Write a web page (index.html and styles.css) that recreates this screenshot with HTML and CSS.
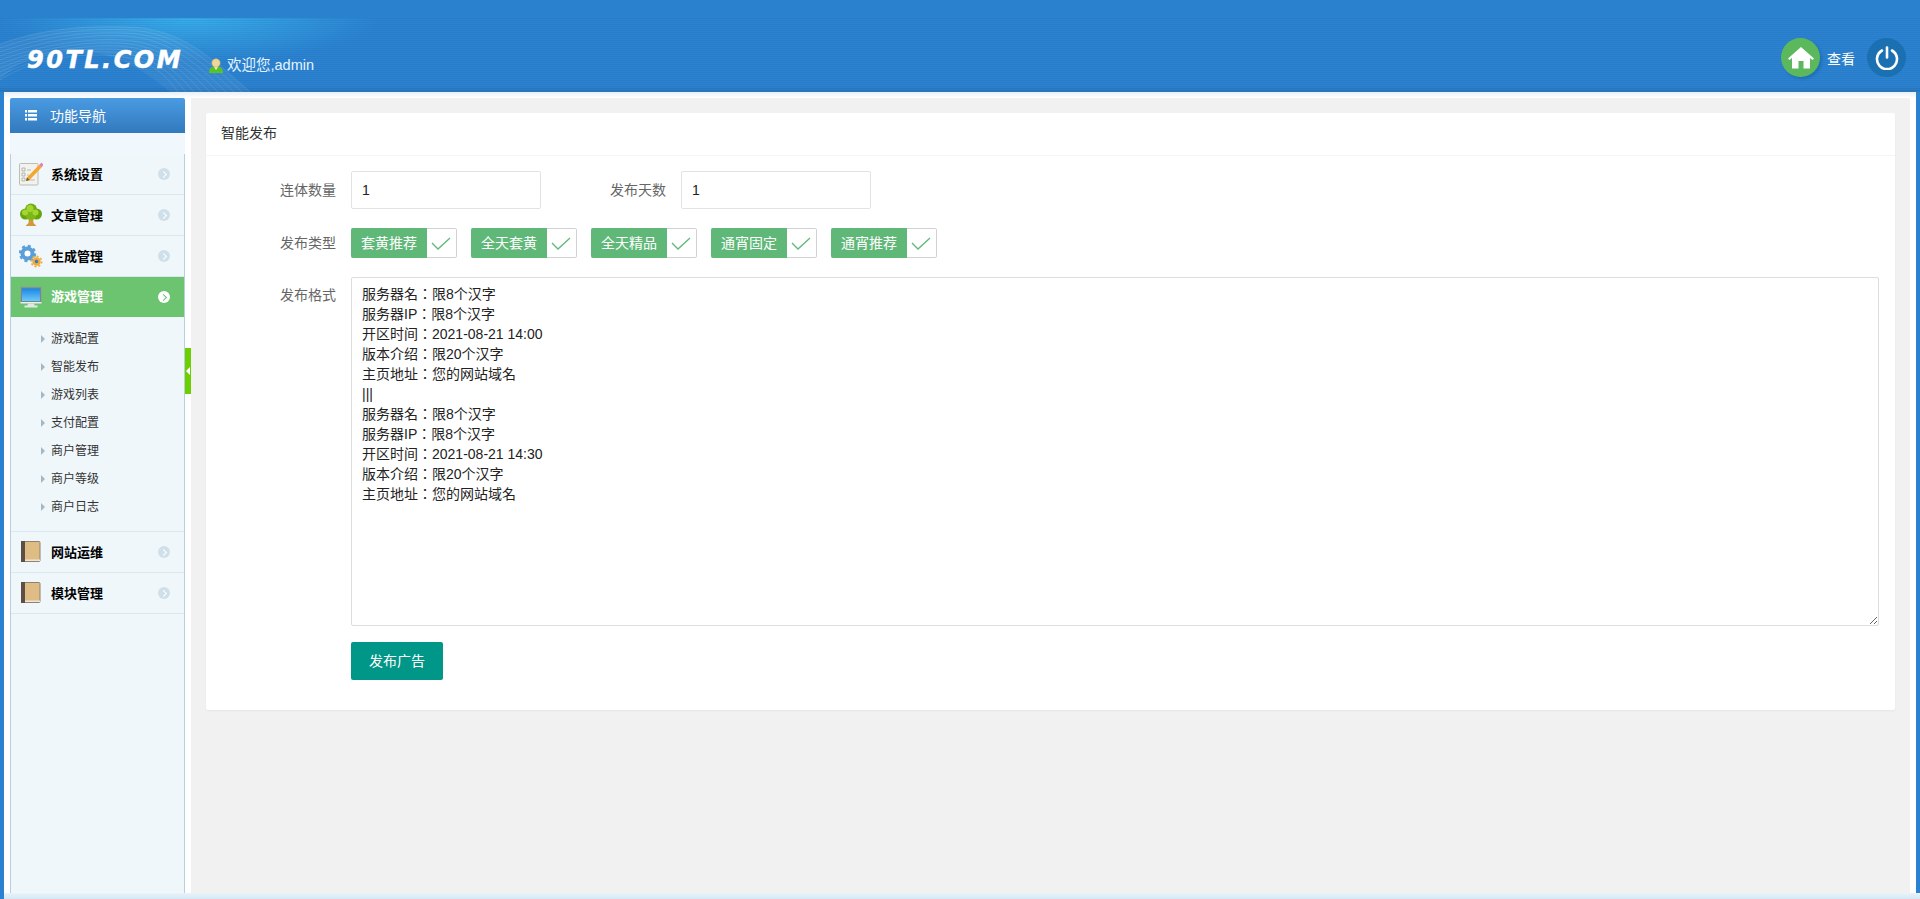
FILE: index.html
```html
<!DOCTYPE html>
<html lang="zh-CN">
<head>
<meta charset="utf-8">
<title>智能发布</title>
<link rel="stylesheet" href="styles.css">
</head>
<body>
<header class="top">
  <svg class="waves" viewBox="0 0 400 74" width="400" height="74" aria-hidden="true">
    <path d="M0 26C40 12 80 7 130 9S210 38 250 74H170C130 40 90 26 50 36S15 50 0 62Z" fill="#fff" fill-opacity=".06"/>
    <g fill="none" stroke="#fff" stroke-opacity=".11">
      <path d="M0 26C40 12 80 7 130 9S210 38 250 74"/>
      <path d="M0 30C40 16 80 10 128 12S205 40 242 74"/>
      <path d="M0 34C40 20 80 13 126 15S200 42 234 74"/>
      <path d="M0 38C40 24 80 16 124 18S195 44 226 74"/>
      <path d="M0 42C40 28 80 20 122 22S190 46 218 74"/>
      <path d="M0 46C40 31 80 23 120 25S185 48 210 74"/>
      <path d="M0 50C36 35 75 27 116 28S180 50 202 74"/>
      <path d="M0 54C32 38 70 30 112 31S175 52 194 74"/>
      <path d="M0 58C28 42 65 33 108 34S170 54 186 74"/>
      <path d="M0 62C24 46 60 36 104 37S165 56 178 74"/>
    </g>
  </svg>
  <div class="brand">
    <span class="logo">90TL.COM</span>
    <span class="welcome">
      <svg class="user" viewBox="0 0 14 15" width="14" height="15" aria-hidden="true">
        <path d="M0 15c0-4 2-6 4-6h6c2 0 4 2 4 6z" fill="#58c322"/>
        <path d="M5 9l2 3 2-3z" fill="#eaf6e0"/>
        <circle cx="7" cy="5" r="4.200" fill="#f1d795" stroke="#c9a765" stroke-width=".6"/>
      </svg>
      欢迎您,admin
    </span>
  </div>
  <div class="actions">
    <span class="round home">
      <svg viewBox="0 0 26 24" width="26" height="24" aria-hidden="true">
        <path d="M13 1 0 12.500l1.600 1.600L4 12v10.500h6.500V15h5v7.500H22V12l2.400 2.100L26 12.500z" fill="#fff"/>
      </svg>
    </span>
    <span class="look">查看</span>
    <span class="round power">
      <svg viewBox="0 0 24 24" width="24" height="24" aria-hidden="true">
        <path d="M7 4.500a10 10 0 1 0 10 0" fill="none" stroke="#fff" stroke-width="2.600" stroke-linecap="round"/>
        <path d="M12 1.500v10" fill="none" stroke="#fff" stroke-width="2.600" stroke-linecap="round"/>
      </svg>
    </span>
  </div>
</header>

<div class="shell">
  <aside class="side">
    <div class="side-head">
      <svg viewBox="0 0 12 11" width="12" height="11" aria-hidden="true">
        <path d="M0 0h2v2.500H0zM3 0h9v2.500H3zM0 4h2v2.500H0zM3 4h9v2.500H3zM0 8h2v2.500H0zM3 8h9v2.500H3z" fill="#fff"/>
      </svg>
      <span>功能导航</span>
    </div>
    <div class="side-gap"></div>
    <nav class="menu">
      <a class="item">
        <svg class="ico" viewBox="0 0 24 24" aria-hidden="true">
          <rect x="0.500" y="1.500" width="18.500" height="21.500" rx="1" fill="#f2f2ee" stroke="#bdbdb5"/>
          <path d="M3 6h3v3H3zM3 11h3v3H3zM3 16h3v3H3z" fill="none" stroke="#a8a8a2" stroke-width=".8"/>
          <path d="M8 8h4M8 13h2M8 18h8" stroke="#bcbcb5"/>
          <path d="M8 15.500 20 3l2.500 2.500L10.500 18 7 19z" fill="#f4a72b"/>
          <path d="M7 19l1-3.500 2.500 2.500z" fill="#6b5a40"/>
          <path d="M20 3l1.800-1.800a1 1 0 0 1 1.400 0l.8.800a1 1 0 0 1 0 1.400L22.500 5.500z" fill="#e77fb0"/>
        </svg>
        <span>系统设置</span><i class="dot"></i>
      </a>
      <a class="item">
        <svg class="ico" viewBox="0 0 24 24" aria-hidden="true">
          <path d="M10 14h4l.5 6 3 3H6.500l3-3z" fill="#d09a3c"/>
          <circle cx="12" cy="6.500" r="6" fill="#74ad10"/>
          <circle cx="6.500" cy="11" r="5.500" fill="#69a30d"/>
          <circle cx="17.500" cy="11" r="5.500" fill="#69a30d"/>
          <circle cx="12" cy="11.500" r="5.500" fill="#7fb815"/>
          <circle cx="11" cy="5.500" r="3.500" fill="#a4d633"/>
          <circle cx="6" cy="9.500" r="3" fill="#a4d633"/>
          <circle cx="16.500" cy="9.500" r="3" fill="#a4d633"/>
        </svg>
        <span>文章管理</span><i class="dot"></i>
      </a>
      <a class="item">
        <svg class="ico" viewBox="0 0 24 24" aria-hidden="true">
          <circle cx="8.500" cy="9.500" r="5" fill="#fff" stroke="#5b9fd8" stroke-width="4"/>
          <circle cx="8.500" cy="9.500" r="7.500" fill="none" stroke="#5b9fd8" stroke-width="2.400" stroke-dasharray="3 2.900"/>
          <circle cx="17.500" cy="17.500" r="3" fill="#2f7ec4" stroke="#f0a93a" stroke-width="2.500"/>
          <circle cx="17.500" cy="17.500" r="5.200" fill="none" stroke="#f0a93a" stroke-width="1.600" stroke-dasharray="2 2"/>
        </svg>
        <span>生成管理</span><i class="dot"></i>
      </a>
      <a class="item active">
        <svg class="ico" viewBox="0 0 24 24" aria-hidden="true">
          <defs>
            <linearGradient id="screen" x1="0" y1="0" x2="0" y2="1">
              <stop offset="0" stop-color="#1a86e6"/>
              <stop offset="1" stop-color="#6ec8f8"/>
            </linearGradient>
          </defs>
          <rect x="1.500" y="2" width="21" height="16" rx="1" fill="#6f8f80" stroke="#8aa596"/>
          <rect x="3" y="3.500" width="18" height="12.500" fill="url(#screen)"/>
          <path d="M1.500 17h21v1.500h-21z" fill="#e9efe9"/>
          <path d="M9 18.500h6l.5 2h3v2H5.500v-2h3z" fill="#e4e8e4"/>
        </svg>
        <span>游戏管理</span><i class="dot on"></i>
      </a>
      <ul class="sub">
        <li>游戏配置</li>
        <li>智能发布</li>
        <li>游戏列表</li>
        <li>支付配置</li>
        <li>商户管理</li>
        <li>商户等级</li>
        <li>商户日志</li>
      </ul>
      <a class="item">
        <svg class="ico" viewBox="0 0 24 24" aria-hidden="true">
          <rect x="2.500" y="1.500" width="18.500" height="20" rx="1" fill="#dfbc84" stroke="#8e8273"/>
          <rect x="2" y="1" width="4" height="21" fill="#5d4f45"/>
          <path d="M6 19.500h15v1.500H6z" fill="#efe6d6"/>
        </svg>
        <span>网站运维</span><i class="dot"></i>
      </a>
      <a class="item">
        <svg class="ico" viewBox="0 0 24 24" aria-hidden="true">
          <rect x="2.500" y="1.500" width="18.500" height="20" rx="1" fill="#dfbc84" stroke="#8e8273"/>
          <rect x="2" y="1" width="4" height="21" fill="#5d4f45"/>
          <path d="M6 19.500h15v1.500H6z" fill="#efe6d6"/>
        </svg>
        <span>模块管理</span><i class="dot"></i>
      </a>
    </nav>
    <div class="toggle"></div>
  </aside>

  <main class="content">
    <section class="panel">
      <div class="panel-title">智能发布</div>
      <form class="form">
        <div class="row row-inputs">
          <label class="label">连体数量</label>
          <input class="input" type="text" value="1">
          <label class="label label-second">发布天数</label>
          <input class="input" type="text" value="1">
        </div>
        <div class="row row-checks">
          <label class="label">发布类型</label>
          <div class="checks">
            <span class="check"><b>套黄推荐</b><svg viewBox="0 0 30 30" width="30" height="30" aria-hidden="true"><path class="tick" d="M5 15l6 6L23 10"/></svg></span>
            <span class="check"><b>全天套黄</b><svg viewBox="0 0 30 30" width="30" height="30" aria-hidden="true"><path class="tick" d="M5 15l6 6L23 10"/></svg></span>
            <span class="check"><b>全天精品</b><svg viewBox="0 0 30 30" width="30" height="30" aria-hidden="true"><path class="tick" d="M5 15l6 6L23 10"/></svg></span>
            <span class="check"><b>通宵固定</b><svg viewBox="0 0 30 30" width="30" height="30" aria-hidden="true"><path class="tick" d="M5 15l6 6L23 10"/></svg></span>
            <span class="check"><b>通宵推荐</b><svg viewBox="0 0 30 30" width="30" height="30" aria-hidden="true"><path class="tick" d="M5 15l6 6L23 10"/></svg></span>
          </div>
        </div>
        <div class="row row-area">
          <label class="label">发布格式</label>
          <textarea class="area" lang="zh-Hant">服务器名：限8个汉字
服务器IP：限8个汉字
开区时间：2021-08-21 14:00
版本介绍：限20个汉字
主页地址：您的网站域名
|||
服务器名：限8个汉字
服务器IP：限8个汉字
开区时间：2021-08-21 14:30
版本介绍：限20个汉字
主页地址：您的网站域名</textarea>
        </div>
        <button class="submit" type="button">发布广告</button>
      </form>
    </section>
  </main>
</div>
<div class="foot"></div>
</body>
</html>
```
FILE: styles.css
```css
* { box-sizing: border-box; }
html, body { height: 100%; }
body {
  margin: 0;
  height: 899px;
  overflow: hidden;
  display: flex;
  flex-direction: column;
  background: #2a82d0;
  font-family: "Liberation Sans", "Noto Sans CJK SC", sans-serif;
  font-size: 14px;
  color: #333;
}

/* header */
.top {
  position: relative;
  flex: 0 0 92px;
  display: flex;
  justify-content: space-between;
  padding: 38px 14px 0 27px;
  background: linear-gradient(#2a82cf 0, #2a82cf 86px, #2874b8 92px);
  overflow: hidden;
}
.top::before {
  content: "";
  position: absolute;
  left: 0;
  right: 0;
  top: 18px;
  bottom: 0;
  background: radial-gradient(ellipse 190px 44px at 190px 0, rgba(60, 190, 245, .7), rgba(60, 190, 245, 0));
}
.top::after {
  content: "";
  position: absolute;
  left: 0;
  right: 0;
  top: 18px;
  bottom: 0;
  background: repeating-linear-gradient(rgba(0, 50, 120, .07) 0 1px, rgba(255, 255, 255, .01) 1px 2px);
  pointer-events: none;
}
.waves { position: absolute; left: 0; top: 18px; }
.brand { position: relative; z-index: 1; display: flex; align-items: flex-start; }
.logo {
  margin-top: 10px;
  width: 182px;
  color: #fff;
  font: italic 700 24px/24px "DejaVu Sans", sans-serif;
  letter-spacing: 2.500px;
  -webkit-text-stroke: .5px #fff;
  white-space: nowrap;
}
.welcome {
  display: flex;
  align-items: center;
  gap: 4px;
  margin-top: 17px;
  color: #e6f4ff;
  font-size: 14.500px;
  line-height: 20px;
}
.user { flex: none; }
.actions { position: relative; z-index: 1; display: flex; align-items: flex-start; }
.round {
  width: 39px;
  height: 39px;
  border-radius: 50%;
  display: flex;
  align-items: center;
  justify-content: center;
}
.home { background: #5cb85c; box-shadow: 2px 2px 3px rgba(0, 60, 120, .25); }
.power { background: #1a70b1; }
.look { width: 47px; padding-left: 7px; line-height: 42px; color: #fff; font-size: 14px; }

/* shell */
.shell {
  flex: 0 0 801px;
  display: flex;
  margin: 0 4px;
  background: #fff;
  background-image: linear-gradient(#e6f0f8, #fff 6px);
}
.side {
  position: relative;
  flex: 0 0 187px;
  padding: 6px 6px 0;
  display: flex;
  flex-direction: column;
}
.side-head {
  flex: 0 0 35px;
  display: flex;
  align-items: center;
  gap: 13px;
  padding-left: 15px;
  color: #fff;
  font-size: 14px;
  border-radius: 2px 2px 0 0;
  background: linear-gradient(#4a9be2, #3279bd);
}
.side-head span { margin-top: -2px; }
.side-gap { flex: 0 0 21px; background: #f0f7fd; }
.menu {
  flex: 1;
  background: #eff7fb;
  border-left: 1px solid #b5d0e0;
  border-right: 1px solid #b5d0e0;
}
.item {
  height: 41px;
  display: flex;
  align-items: center;
  padding-left: 8px;
  border-bottom: 1px solid #d9e7ef;
  color: #000;
  font-size: 13px;
  font-weight: 700;
}
.ico { width: 24px; height: 24px; flex: none; margin-right: 8px; }
.item span { width: 107px; margin-top: -2px; }
.dot {
  position: relative;
  width: 12px;
  height: 12px;
  border-radius: 50%;
  background: #cfe0ea;
}
.dot::after {
  content: "";
  position: absolute;
  left: 3px;
  top: 3.500px;
  width: 4px;
  height: 4px;
  border-top: 1.500px solid #fff;
  border-right: 1.500px solid #fff;
  transform: rotate(45deg);
}
.dot.on { background: #fff; }
.dot.on::after { border-color: #6cc470; }
.active { background: #6cc470; color: #fff; border-bottom: 0; height: 40px; }
.active span { margin-top: -4px; }
.sub {
  list-style: none;
  margin: 0;
  padding: 8px 0 10px;
  border-bottom: 1px solid #d9e7ef;
}
.sub li {
  position: relative;
  height: 28px;
  line-height: 28px;
  padding-left: 40px;
  font-size: 12px;
  color: #333;
}
.sub li::before {
  content: "";
  position: absolute;
  left: 30px;
  top: 10px;
  border-left: 4px solid #a3b8c6;
  border-top: 4px solid transparent;
  border-bottom: 4px solid transparent;
}
.toggle {
  position: absolute;
  left: 181px;
  top: 256px;
  width: 6px;
  height: 46px;
  background: #6ccf00;
}
.toggle::after {
  content: "";
  position: absolute;
  left: 1px;
  top: 19px;
  border-right: 4px solid #fff;
  border-top: 4px solid transparent;
  border-bottom: 4px solid transparent;
}

/* content */
.content {
  flex: 1;
  margin: 6px 6px 0 0;
  padding: 15px 15px 0;
  background: #f1f1f1;
}
.panel {
  height: 597px;
  background: #fff;
  border-radius: 2px;
  box-shadow: 0 1px 2px rgba(0, 0, 0, .05);
}
.panel-title {
  height: 43px;
  padding-left: 15px;
  line-height: 41px;
  border-bottom: 1px solid #f6f6f6;
  color: #333;
  font-size: 14px;
}
.form { padding: 15px 15px 0 0; }
.row { display: flex; align-items: flex-start; }
.row-inputs { margin-bottom: 19px; }
.row-checks { margin-bottom: 19px; }
.label {
  flex: 0 0 145px;
  padding: 9px 15px 0 0;
  line-height: 20px;
  text-align: right;
  color: #666;
  font-size: 14px;
}
.row-area .label { padding-top: 8px; }
.label-second { flex-basis: 140px; }
.input {
  width: 190px;
  height: 38px;
  padding: 0 10px;
  border: 1px solid #e2e2e2;
  border-radius: 2px;
  background: #fff;
  color: #222;
  font: 14px "Liberation Sans", sans-serif;
  outline: 0;
}
.checks { display: flex; gap: 14px; }
.row-checks .label { padding-top: 5px; }
.check {
  display: flex;
  width: 106px;
  height: 30px;
  border: 1px solid #d2d2d2;
  border-left: 0;
  border-radius: 2px;
}
.check b {
  flex: 0 0 76px;
  margin: -1px 0;
  background: #5fb878;
  color: #fff;
  font-weight: 400;
  font-size: 14px;
  line-height: 30px;
  text-align: center;
  border-radius: 2px 0 0 2px;
}
.check svg { flex: none; margin: -1px 0 0 0; }
.tick { fill: none; stroke: #5fb878; stroke-width: 1.300; }
.area {
  display: block;
  width: 1528px;
  height: 349px;
  padding: 6px 10px;
  border: 1px solid #ddd;
  border-radius: 2px;
  background: #fff;
  color: #222;
  font: 14px/20px "Liberation Sans", "Noto Sans CJK TC", sans-serif;
  outline: 0;
}
.submit {
  display: block;
  width: 92px;
  height: 38px;
  margin: 16px 0 0 145px;
  padding: 0 0 3px;
  border: 0;
  border-radius: 2px;
  background: #009688;
  color: #fff;
  font: 14px "Liberation Sans", "Noto Sans CJK SC", sans-serif;
}

.foot {
  flex: 0 0 6px;
  background: linear-gradient(#e9f3f9, #d6e8f5);
  margin-left: 4px;
}
```
